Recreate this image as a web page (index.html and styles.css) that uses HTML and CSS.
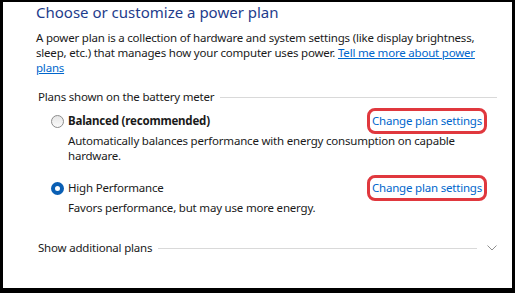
FILE: index.html
```html
<!DOCTYPE html>
<html>
<head lang="en">
  <meta charset="UTF-8">
  <title>Power Options</title>
  <link rel="stylesheet" href="styles.css">
</head>
<body>
  <div class="frame">
    <h1 class="title">Choose or customize a power plan</h1>
    <p class="intro">A power plan is a collection of hardware and system settings (like display brightness,<br>
      sleep, etc.) that manages how your computer uses power. <a href="#">Tell me more about power<br>
      plans</a></p>

    <div class="group">
      <span class="groupLabel">Plans shown on the battery meter</span>
      <span class="rule"></span>
    </div>

    <div class="plan">
      <div class="planRow">
        <span class="radio"></span>
        <span class="planName planBold">Balanced (recommended)</span>
        <a class="change" href="#">Change plan settings</a>
      </div>
      <div class="planDesc">Automatically balances performance with energy consumption on capable<br>hardware.</div>
    </div>

    <div class="plan">
      <div class="planRow">
        <span class="radio radioOn"></span>
        <span class="planName">High Performance</span>
        <a class="change" href="#">Change plan settings</a>
      </div>
      <div class="planDesc">Favors performance, but may use more energy.</div>
    </div>

    <div class="group groupMore">
      <span class="groupLabel">Show additional plans</span>
      <span class="rule"></span>
      <svg class="chevron" width="10" height="6" viewBox="0 0 10 6">
        <path d="M0.5 0.5 L5 5 L9.5 0.5" fill="none" stroke="#8f8f8f" stroke-width="1"/>
      </svg>
    </div>
  </div>
</body>
</html>
```

FILE: styles.css
```css
body {
  margin: 0;
  background: #000;
  font-family: "Noto Sans", "Open Sans", sans-serif;
  font-size: 11.5px;
  letter-spacing: -0.2px;
  color: #1a1a1a;
}
.frame {
  box-sizing: border-box;
  width: 515px;
  height: 293px;
  background: #fff;
  border-style: solid;
  border-color: #000;
  border-width: 2px 3px 5px 3px;
  padding: 0 15px 0 33px;
}
.title {
  margin: 0;
  font-size: 15px;
  font-weight: normal;
  letter-spacing: 0;
  color: #1e3c8c;
  line-height: 20px;
}
.intro {
  margin: 8px 0 0 0;
  line-height: 15px;
  white-space: nowrap;
}
a {
  color: #0066cc;
  text-decoration: underline;
}
.group {
  display: flex;
  align-items: center;
  margin: 14px 0 0 2px;
  line-height: 16px;
}
.rule {
  flex: 1;
  height: 1px;
  background: #d9d9d9;
  margin-left: 6px;
}
.plan {
  margin-left: 15px;
}
.planRow {
  display: flex;
  align-items: center;
  margin-top: 8px;
  line-height: 16px;
}
.plan + .plan .planRow {
  margin-top: 17px;
}
.radio {
  box-sizing: border-box;
  width: 13px;
  height: 13px;
  border-radius: 50%;
  border: 1px solid #8c8c8c;
  background: linear-gradient(#e6e6e6, #fafafa);
  margin-right: 4px;
}
.radioOn {
  border: 4px solid #0a5fb4;
  background: #fff;
}
.planName {
  flex: 1;
}
.planBold {
  font-weight: bold;
}
.change {
  text-decoration: none;
  margin-right: 15px;
  outline: 3px solid #e0383e;
  outline-offset: 2px;
  border-radius: 3px;
}
.planDesc {
  padding-left: 17px;
  margin-top: 4px;
  line-height: 15px;
}
.groupMore {
  margin-top: 25px;
}
.groupMore .rule {
  margin-right: 10px;
}
```
